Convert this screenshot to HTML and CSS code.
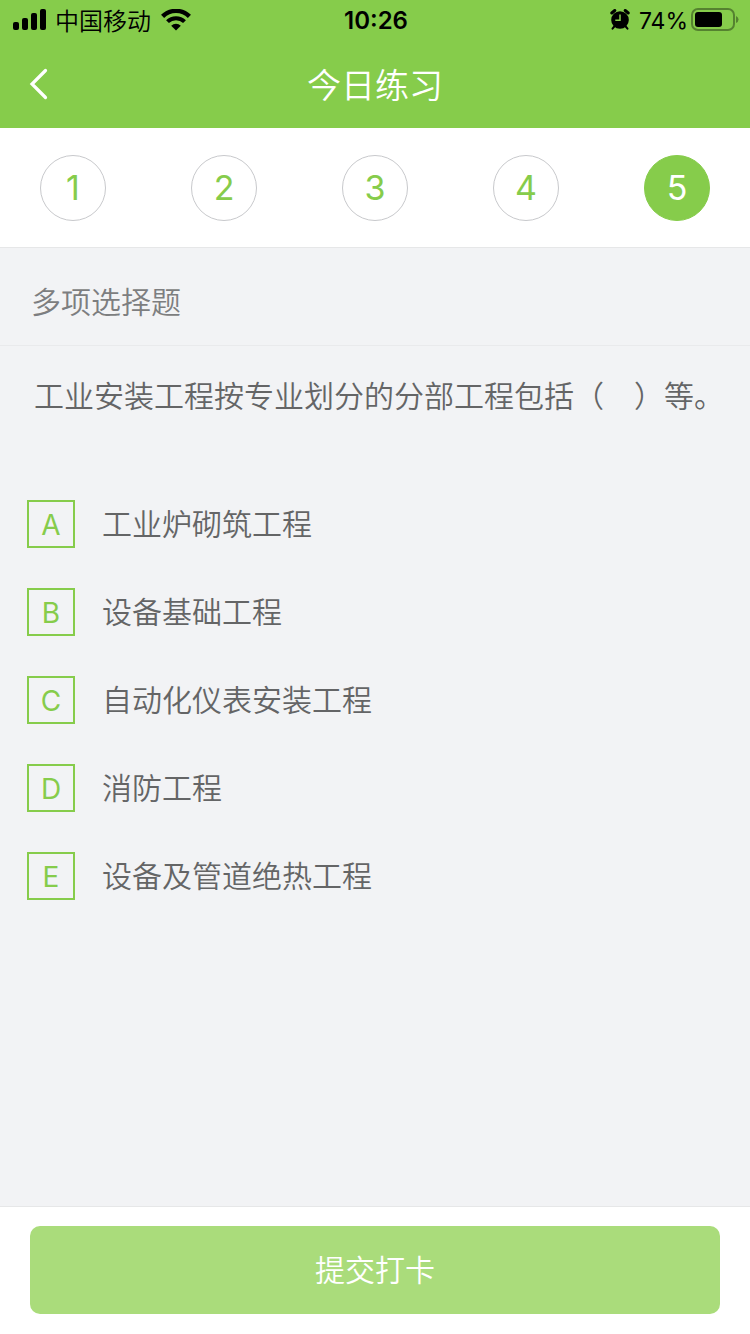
FILE: index.html
```html
<!DOCTYPE html>
<html lang="zh-CN">
<head>
<meta charset="utf-8">
<meta name="viewport" content="width=device-width, initial-scale=1">
<title>今日练习</title>
<link rel="stylesheet" href="styles.css">
</head>
<body>
<div class="screen">
  <header class="header">
    <div class="status">
      <div class="status-side">
        <svg class="signal" width="34" height="22" viewBox="0 0 34 22" aria-hidden="true">
          <rect x="0" y="13" width="6" height="8" rx="2"/>
          <rect x="9" y="9" width="6" height="12" rx="2"/>
          <rect x="18" y="4" width="6" height="17" rx="2"/>
          <rect x="27" y="0" width="6" height="21" rx="2"/>
        </svg>
        <span class="carrier">中国移动</span>
        <svg class="wifi" width="30" height="22" viewBox="0 0 30 22" aria-hidden="true">
          <path d="M1.600 7.400a19 19 0 0 1 26.800 0" fill="none" stroke="#000" stroke-width="4.400"/>
          <path d="M6.500 12.700a12 12 0 0 1 17 0" fill="none" stroke="#000" stroke-width="4"/>
          <path d="M10.200 16.700a6.800 6.800 0 0 1 9.600 0L15 21.400z"/>
        </svg>
      </div>
      <time class="clock">10:26</time>
      <div class="status-side status-end">
        <svg class="alarm" width="20" height="22" viewBox="0 0 20 22" aria-hidden="true">
          <circle cx="10" cy="11" r="8.800"/>
          <path d="M1.800 4 4.800 1.500M18.200 4 15.200 1.500" stroke="#000" stroke-width="3" stroke-linecap="round"/>
          <path d="M4.300 17.500 2.500 19.700M15.700 17.500l1.800 2.200" stroke="#000" stroke-width="2" stroke-linecap="round"/>
          <path d="M10 5.500v5.800H5.300" fill="none" stroke="#86cc4b" stroke-width="1.500"/>
        </svg>
        <span class="percent">74%</span>
        <svg class="battery" width="48" height="24" viewBox="0 0 48 24" aria-hidden="true">
          <rect x="1" y="1" width="42" height="21" rx="6" fill="none" stroke="#558230" stroke-width="2"/>
          <rect x="4" y="4" width="27" height="15" rx="3"/>
          <path d="M45 8q2.500 1 2.500 3.500t-2.500 3.500z" fill="#558230"/>
        </svg>
      </div>
    </div>
    <nav class="navbar">
      <button class="back" type="button" aria-label="返回">
        <svg width="20" height="32" viewBox="0 0 20 32" aria-hidden="true">
          <path d="M16.500 2.500 3 16l13.500 13.500" fill="none" stroke="#fff" stroke-width="3.200" stroke-linecap="round"/>
        </svg>
      </button>
      <h1 class="title">今日练习</h1>
    </nav>
  </header>

  <nav class="steps" aria-label="题号">
    <button class="step" type="button">1</button>
    <button class="step" type="button">2</button>
    <button class="step" type="button">3</button>
    <button class="step" type="button">4</button>
    <button class="step step-current" type="button" aria-current="step">5</button>
  </nav>

  <main class="content">
    <h2 class="kind">多项选择题</h2>
    <fieldset class="question">
      <legend class="stem">工业安装工程按专业划分的分部工程包括（　）等。</legend>
      <label class="option"><input class="tick" type="checkbox" name="answer" value="A"><span class="letter">A</span><span>工业炉砌筑工程</span></label>
      <label class="option"><input class="tick" type="checkbox" name="answer" value="B"><span class="letter">B</span><span>设备基础工程</span></label>
      <label class="option"><input class="tick" type="checkbox" name="answer" value="C"><span class="letter">C</span><span>自动化仪表安装工程</span></label>
      <label class="option"><input class="tick" type="checkbox" name="answer" value="D"><span class="letter">D</span><span>消防工程</span></label>
      <label class="option"><input class="tick" type="checkbox" name="answer" value="E"><span class="letter">E</span><span>设备及管道绝热工程</span></label>
    </fieldset>
  </main>

  <footer class="footer">
    <button class="submit" type="button">提交打卡</button>
  </footer>
</div>
</body>
</html>
```
FILE: styles.css
```css
* {
  box-sizing: border-box;
}

body {
  margin: 0;
  background: #f2f3f5;
  color: #646566;
  font-family: Inter, "Noto Sans CJK SC", sans-serif;
  font-size: 30px;
  font-weight: 350;
}

button {
  border: 0;
  padding: 0;
  background: none;
  color: inherit;
  font: inherit;
  cursor: pointer;
}

svg {
  display: block;
  flex: none;
}

.screen {
  display: flex;
  flex-direction: column;
  min-height: 100vh;
}

.header {
  background: #86cc4b;
}

.status {
  display: grid;
  grid-template-columns: 1fr auto 1fr;
  align-items: center;
  height: 40px;
  padding: 0 11px 0 13px;
  color: #000;
  font-size: 24px;
  font-weight: 400;
}

.status-side {
  display: flex;
  align-items: center;
}

.status-end {
  justify-content: flex-end;
}

.carrier {
  margin: 0 10px 0 8px;
  padding-top: 3px;
  font-weight: 350;
  line-height: 37px;
}

.clock {
  font-weight: 600;
}

.percent {
  margin: 0 3px 0 9px;
  padding-top: 2px;
  font-size: 23px;
}

.navbar {
  display: grid;
  grid-template-columns: 88px 1fr 88px;
  align-items: center;
  height: 88px;
  color: #fff;
}

.back {
  display: flex;
  align-items: center;
  height: 88px;
  padding-left: 29px;
}

.title {
  margin: 0;
  padding-top: 4px;
  font-size: 34px;
  font-weight: 350;
  line-height: 84px;
  text-align: center;
}

.steps {
  display: flex;
  justify-content: space-between;
  padding: 27px 40px 26px;
  border-bottom: 1px solid #e6e7e8;
  background: #fff;
}

.step {
  width: 66px;
  height: 66px;
  border: 1px solid #c8c9cc;
  border-radius: 50%;
  color: #86cc4b;
  font-size: 34px;
  font-weight: 400;
  line-height: 64px;
}

.step-current {
  border-color: #86cc4b;
  background: #86cc4b;
  color: #fff;
}

.content {
  flex: 1;
}

.kind {
  margin: 0;
  padding: 11px 31px 0;
  border-bottom: 1px solid #e9eaec;
  color: #7d7e80;
  font-size: 30px;
  font-weight: 350;
  line-height: 86px;
}

.question {
  min-width: 0;
  margin: 0;
  border: 0;
  padding: 26px 24px 24px 27px;
}

.stem {
  float: left;
  width: 100%;
  margin-bottom: 80px;
  padding: 0 0 0 7px;
  line-height: 48px;
}

.option {
  display: flex;
  clear: both;
  align-items: center;
  gap: 27px;
  margin-bottom: 40px;
  line-height: 48px;
  cursor: pointer;
}

.tick {
  position: absolute;
  opacity: 0;
}

.letter {
  width: 48px;
  height: 48px;
  border: 2px solid #86cc4b;
  color: #86cc4b;
  font-size: 28px;
  font-weight: 400;
  line-height: 46px;
  text-align: center;
}

.tick:checked + .letter {
  background: #86cc4b;
  color: #fff;
}

.footer {
  padding: 19px 30px 20px;
  border-top: 1px solid #e6e7e8;
  background: #fff;
}

.submit {
  width: 100%;
  height: 88px;
  border-radius: 10px;
  background: #aadc7b;
  color: #fff;
  font-size: 30px;
  line-height: 88px;
}
```
